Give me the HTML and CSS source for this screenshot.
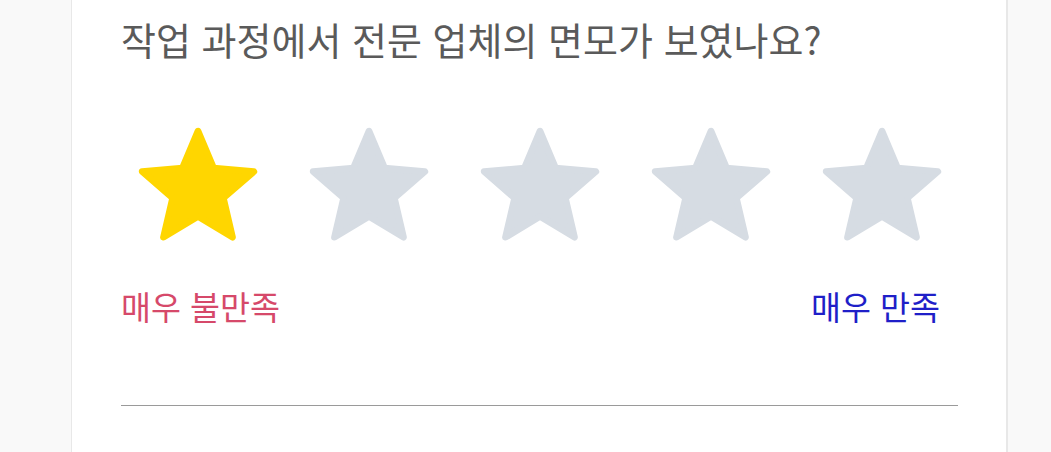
FILE: index.html
```html
<!DOCTYPE html>
<html lang="ko">
<head>
    <meta charset="UTF-8">
    <meta name="viewport" content="width=device-width, initial-scale=1.0">
    <title>만족도 평가</title>
    <link rel="stylesheet" href="styles.css">
</head>
<body>
    <div class="card">
        <h2 class="question">작업 과정에서 전문 업체의 면모가 보였나요?</h2>
        <div class="stars">
            <svg class="star on" viewBox="0 0 24 24"><path d="M12 17.27L18.18 21l-1.64-7.03L22 9.24l-7.19-.61L12 2 9.19 8.63 2 9.24l5.46 4.73L5.82 21z"/></svg>
            <svg class="star" viewBox="0 0 24 24"><path d="M12 17.27L18.18 21l-1.64-7.03L22 9.24l-7.19-.61L12 2 9.19 8.63 2 9.24l5.46 4.73L5.82 21z"/></svg>
            <svg class="star" viewBox="0 0 24 24"><path d="M12 17.27L18.18 21l-1.64-7.03L22 9.24l-7.19-.61L12 2 9.19 8.63 2 9.24l5.46 4.73L5.82 21z"/></svg>
            <svg class="star" viewBox="0 0 24 24"><path d="M12 17.27L18.18 21l-1.64-7.03L22 9.24l-7.19-.61L12 2 9.19 8.63 2 9.24l5.46 4.73L5.82 21z"/></svg>
            <svg class="star" viewBox="0 0 24 24"><path d="M12 17.27L18.18 21l-1.64-7.03L22 9.24l-7.19-.61L12 2 9.19 8.63 2 9.24l5.46 4.73L5.82 21z"/></svg>
        </div>
        <div class="scale">
            <span class="low">매우 불만족</span>
            <span class="high">매우 만족</span>
        </div>
        <hr class="divider">
    </div>
</body>
</html>
```

FILE: styles.css
```css
body {
    font-family: "Noto Sans CJK KR", "Noto Sans", sans-serif;
    background-color: #f9f9f9;
    margin: 0;
    height: 452px;
    overflow: hidden;
}

.card {
    background: #fff;
    margin-left: 71px;
    width: 937px;
    height: 452px;
    border-left: 1px solid #e8e8e8;
    border-right: 2px solid #e8e8e8;
    padding: 13px 48px 0 49px;
    box-sizing: border-box;
}

.question {
    font-size: 38px;
    font-weight: 400;
    line-height: 52px;
    color: #5a5a5a;
    margin: 0;
}

.stars {
    display: flex;
    justify-content: center;
    gap: 37px;
    margin-top: 55px;
}

.star {
    width: 134px;
    height: 134px;
    fill: #d6dce3;
    stroke: #d6dce3;
    stroke-width: 1.2;
    stroke-linejoin: round;
}

.star.on {
    fill: #ffd600;
    stroke: #ffd600;
}

.scale {
    display: flex;
    justify-content: space-between;
    font-size: 32.6px;
    line-height: 44px;
    margin-top: 30px;
    padding-right: 18px;
}

.low {
    color: #d6496a;
}

.high {
    color: #1f1fc8;
}

.divider {
    border: none;
    border-top: 1px solid #9a9a9a;
    margin: 77px 0 0;
}
```
